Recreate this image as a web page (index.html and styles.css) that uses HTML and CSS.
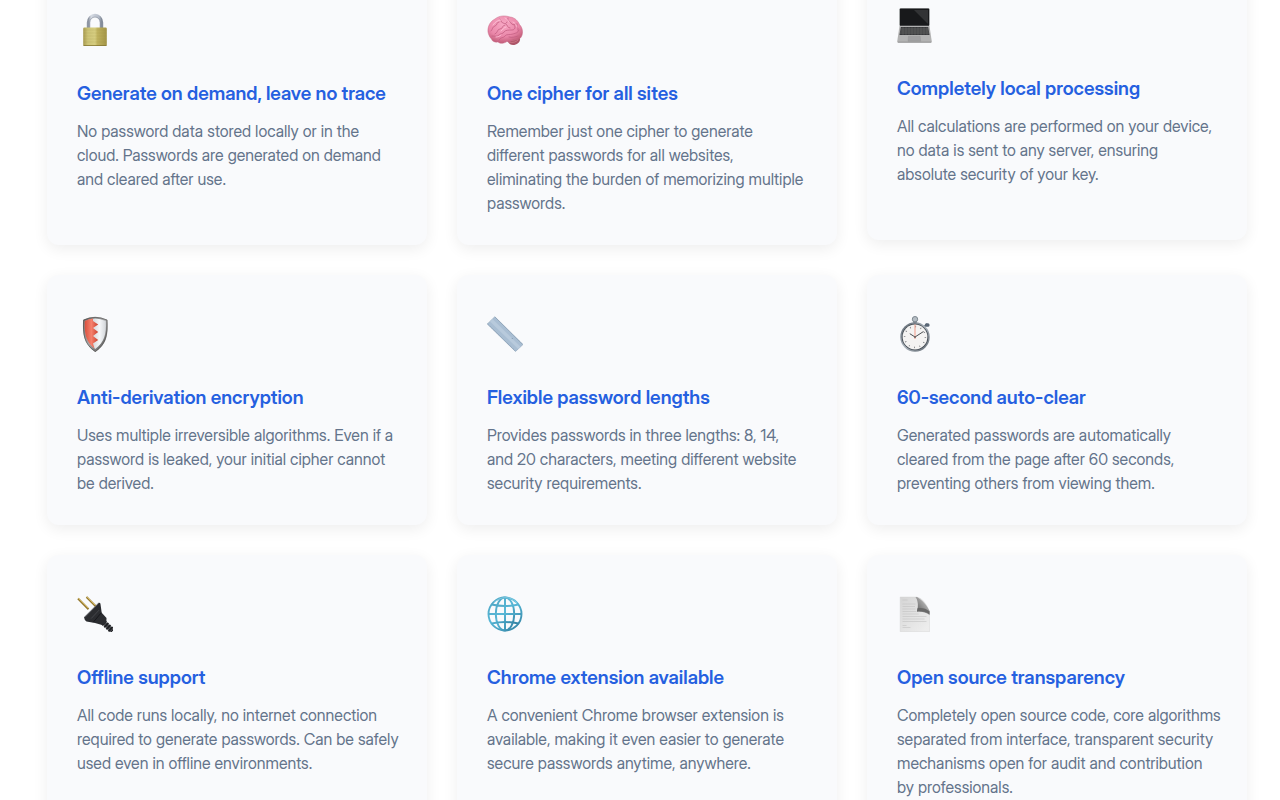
FILE: index.html
```html
<!DOCTYPE html>
<html lang="en">
<head>
<meta charset="utf-8">
<meta name="viewport" content="width=device-width, initial-scale=1">
<title>Features</title>
<link rel="stylesheet" href="styles.css">
</head>
<body>
<main class="features">
  <article class="card">
    <div class="card-icon">
      <svg class="icon" viewBox="0 0 36 36" aria-hidden="true">
        <defs>
          <linearGradient id="brass" x2="1"><stop offset="0" stop-color="#a89b50"/><stop offset=".2" stop-color="#cdc477"/><stop offset=".5" stop-color="#d6cd80"/><stop offset=".6" stop-color="#c0b35f"/><stop offset="1" stop-color="#a39446"/></linearGradient>
          <linearGradient id="steel" x2="1"><stop offset="0" stop-color="#8f96a3"/><stop offset=".2" stop-color="#d5dae3"/><stop offset=".8" stop-color="#b4bbc8"/><stop offset="1" stop-color="#858d9b"/></linearGradient>
        </defs>
        <path d="M11.500 17V10.500a6.500 7 0 0 1 13 0V17" fill="none" stroke="url(#steel)" stroke-width="3.400"/>
        <path d="M12.700 16V10.500a5.300 5.500 0 0 1 10.600 0V16" fill="none" stroke="#7f8794" stroke-width=".5"/>
        <rect x="6.200" y="15.500" width="23.600" height="18.500" rx="1.300" fill="url(#brass)"/>
        <path d="M6.500 18h23M6.500 21h23M6.500 24h23M6.500 27h23M6.500 30h23" stroke="#9c8f43" stroke-width=".4" opacity=".4"/>
        <path d="M6.500 33.500h23" stroke="#857734" stroke-width=".8"/>
      </svg>
    </div>
    <h3 class="card-title">Generate on demand, leave no trace</h3>
    <p class="card-text">No password data stored locally or in the cloud. Passwords are generated on demand and cleared after use.</p>
  </article>

  <article class="card">
    <div class="card-icon">
      <svg class="icon" viewBox="0 0 36 36" aria-hidden="true">
        <defs><radialGradient id="brain" cx=".45" cy=".3" r=".75"><stop offset="0" stop-color="#f7a8c4"/><stop offset=".6" stop-color="#ea87a9"/><stop offset="1" stop-color="#b9546f"/></radialGradient></defs>
        <path d="M20 26c1-3 12-3 13 .5.500 3.500-3 6.500-7 6.500-3.500 0-6-3-6-7z" fill="#ad5568"/>
        <path d="M21 28c4 1 8 0 11-2M22 30c4 1 7 0 9-2" stroke="#d88291" stroke-width=".7" fill="none"/>
        <path d="M1 20C.5 14.500 3 9.500 8 7 12 3.500 18 3.300 23 5c5 .5 8 4 9.500 7.500 3 3 4 8 2 12-1.500 3-5 4-8.500 3-2 2-4 2.500-6 2-3 2-7 2.500-9 .5-3 .5-6-.5-6.500-3C2.500 25 1.500 22.500 1 20z" fill="url(#brain)" stroke="#c96b89" stroke-width=".5"/>
        <path d="M4 19c2-2 1-4 4-5s1-4 4-4M8 22c3-1 2-5 5-5s2-4 5-4M13 7c2 1 0 3 3 4s3 1 4-1M5 24c3 0 5 1 7-1s4-1 5-3 5-2 8-2 4-3 2-5M12 28c1-3 5-2 6-4s5-1 8-2 5-1 6-4M21 6c-1 3 2 3 3 5s3 2 5 1M30 12c-1 3 2 4 1 6M22 25c3 1 6 0 9-1M19 12c2 1 1 4 4 4" fill="none" stroke="#c45f83" stroke-width=".8" stroke-linecap="round"/>
        <path d="M6 13c2-3 5-5 8-5M18 6c2 1 3 2 4 4M14 19c2-1 3-4 5-4M26 10c2 1 3 2 4 5M9 25c2 0 4-1 5-2" fill="none" stroke="#ffc4d8" stroke-width=".8" stroke-linecap="round"/>
      </svg>
    </div>
    <h3 class="card-title">One cipher for all sites</h3>
    <p class="card-text">Remember just one cipher to generate different passwords for all websites,<br>eliminating the burden of memorizing multiple passwords.</p>
  </article>

  <article class="card card-raised">
    <div class="card-icon">
      <svg class="icon" viewBox="0 0 36 36" aria-hidden="true">
        <rect x="2.300" y="1.200" width="30.400" height="18" rx="1.200" fill="#b9bbbd"/>
        <rect x="2.800" y="1.600" width="29.400" height="17.200" rx=".9" fill="#18191b"/>
        <path d="M17 3h14v14z" fill="#3d3e40" opacity=".7"/>
        <path d="M2.500 19h30l2.300 15.500q0 1-1 1H1.200q-1 0-1-1z" fill="#b2b2b2"/>
        <path d="M3.800 20h27.400l1.300 8H2.500z" fill="#37383a"/>
        <path d="M3.700 22h27.700M3.300 24h28.400M3 26h29" stroke="#858585" stroke-width=".5"/>
        <path d="M6 20v8M9 20v8M12 20v8M15 20v8M18 20v8M21 20v8M24 20v8M27 20v8M30 20v8" stroke="#777" stroke-width=".35"/>
        <path d="M11.500 29.200h11.700l.5 5H11z" fill="#a0a0a1" stroke="#8c8c8d" stroke-width=".3"/>
        <path d="M.8 35.200h33.500" stroke="#858585" stroke-width=".8"/>
      </svg>
    </div>
    <h3 class="card-title">Completely local processing</h3>
    <p class="card-text">All calculations are performed on your device, no data is sent to any server, ensuring<br>absolute security of your key.</p>
  </article>

  <article class="card">
    <div class="card-icon">
      <svg class="icon" viewBox="0 0 36 36" aria-hidden="true">
        <defs>
          <linearGradient id="rim" x2="1" y2="1"><stop offset="0" stop-color="#62605f"/><stop offset=".5" stop-color="#a6a7a8"/><stop offset="1" stop-color="#484645"/></linearGradient>
          <linearGradient id="red" x2="1"><stop offset="0" stop-color="#d9503e"/><stop offset=".5" stop-color="#f5816d"/><stop offset="1" stop-color="#cb412f"/></linearGradient>
          <linearGradient id="silver" x2="1"><stop offset="0" stop-color="#aeb0b3"/><stop offset=".7" stop-color="#f5f6f8"/><stop offset="1" stop-color="#d3d6da"/></linearGradient>
        </defs>
        <path d="M6.300 3.800Q18-2 30.300 3.800C31 18 30 28 18.300 36 6.500 28 5.500 18 6.300 3.800z" fill="url(#rim)"/>
        <path d="M7.800 5Q18 0 28.800 5C29.500 18 27.500 26 18.300 33 9 26 7.200 18 7.800 5z" fill="url(#silver)"/>
        <path d="M7.800 5Q12 2.700 16 2.600V5l5.200 3.600L16 12l5.200 4-5.200 4 5.200 4-5.200 3.500 1.500 5C9 26 7.200 18 7.800 5z" fill="url(#red)"/>
        <path d="M6.600 4Q18-1.500 30 4C30.700 18 29.700 28 18.300 35.600 6.800 28 5.900 18 6.600 4z" fill="none" stroke="#4d4b4a" stroke-width=".6"/>
      </svg>
    </div>
    <h3 class="card-title">Anti-derivation encryption</h3>
    <p class="card-text">Uses multiple irreversible algorithms. Even if a password is leaked, your initial cipher cannot be derived.</p>
  </article>

  <article class="card">
    <div class="card-icon">
      <svg class="icon" viewBox="0 0 36 36" aria-hidden="true">
        <path d="M7.800.7 36 28.500l-7.500 7L.3 8z" fill="#a9bed3" stroke="#8299ae" stroke-width=".5"/>
        <path d="M5.500 3 33.500 30.700l-2.400 2.300L3 5.400z" fill="#b8cadc"/>
        <path d="m8 1 27.700 27.500" stroke="#718aa2" stroke-width=".9" stroke-dasharray=".6 .9"/>
        <path d="m.7 8 27.800 27.200" stroke="#7b92a8" stroke-width=".9" stroke-dasharray=".6 .9"/>
        <circle cx="25.300" cy="22.500" r=".6" fill="#8198af"/>
      </svg>
    </div>
    <h3 class="card-title">Flexible password lengths</h3>
    <p class="card-text">Provides passwords in three lengths: 8, 14,<br>and 20 characters, meeting different website security requirements.</p>
  </article>

  <article class="card">
    <div class="card-icon">
      <svg class="icon" viewBox="0 0 36 36" aria-hidden="true">
        <defs><linearGradient id="case" x2="1" y2="1"><stop offset="0" stop-color="#555e68"/><stop offset=".5" stop-color="#adb5bd"/><stop offset="1" stop-color="#59626b"/></linearGradient></defs>
        <path d="m26 12 4-4" stroke="#6f7b87" stroke-width="2"/>
        <rect x="28" y="7.200" width="4.500" height="3.500" rx="1.500" fill="#596675"/>
        <rect x="16.300" y="3" width="3.400" height="4" fill="#68737d"/>
        <circle cx="18" cy="3.200" r="2.700" fill="#b5bdc4" stroke="#7e8890" stroke-width="1"/>
        <circle cx="18" cy="21" r="14.700" fill="url(#case)"/>
        <circle cx="18" cy="21" r="13.200" fill="#414850"/>
        <circle cx="18" cy="21" r="12.400" fill="#f4f3f2"/>
        <circle cx="18" cy="21" r="10.400" fill="none" stroke="#77797c" stroke-width="1.500" stroke-dasharray=".8 4.645"/>
        <path d="m18 21-5.200-3.300M18 21l8.500-5.500" stroke="#353a3d" stroke-width=".9"/>
        <path d="M18 23V8.500" stroke="#f29b87" stroke-width="1"/>
        <circle cx="18" cy="21" r=".9" fill="#555"/>
      </svg>
    </div>
    <h3 class="card-title">60-second auto-clear</h3>
    <p class="card-text">Generated passwords are automatically cleared from the page after 60 seconds, preventing others from viewing them.</p>
  </article>

  <article class="card">
    <div class="card-icon">
      <svg class="icon" viewBox="0 0 36 36" aria-hidden="true">
        <path d="m1 2.500 10.500 10.700M9.500 1l9 9" stroke="#94782e" stroke-width="2"/>
        <path d="m1.300 2.200 10 10M9.800.8l8.700 8.700" stroke="#dfc56e" stroke-width=".8"/>
        <path d="m25 25 10.500 10" stroke="#55565a" stroke-width="4"/>
        <path d="m26.500 26.500 9 8.500" stroke="#1f2024" stroke-width="6" stroke-dasharray="2 .9"/>
        <path d="M21.600 6.800q1.200-.4 1.800.7l1.300 9.200 4.800 5.300q.5 5.500-4.500 7L18 27l-8.500-1.500q-2.200-1.500-2.500-4.200z" fill="#2b2c30"/>
        <path d="M21.800 7.200 7.800 21.400" stroke="#696b70" stroke-width=".8"/>
        <path d="m24.300 16.700-8 9.500" stroke="#111217" stroke-width=".8"/>
        <path d="m22.200 14-8 8.500" stroke="#4a4b50" stroke-width=".8"/>
      </svg>
    </div>
    <h3 class="card-title">Offline support</h3>
    <p class="card-text">All code runs locally, no internet connection required to generate passwords. Can be safely used even in offline environments.</p>
  </article>

  <article class="card">
    <div class="card-icon">
      <svg class="icon" viewBox="0 0 36 36" aria-hidden="true">
        <defs><linearGradient id="globe" x2=".8" y2="1"><stop offset="0" stop-color="#4fa6c4"/><stop offset=".5" stop-color="#58b8d7"/><stop offset="1" stop-color="#3687a8"/></linearGradient></defs>
        <g fill="none" stroke="url(#globe)" stroke-width="1.900">
          <circle cx="18" cy="18" r="16.500"/>
          <ellipse cx="18" cy="18" rx="9.200" ry="16.500"/>
          <path d="M17 1.500h2v33h-2zM1.500 17h33v2h-33z" fill="url(#globe)" stroke="none"/>
          <path d="M4.500 8.500q13.500 3 27 0M4.500 27.500q13.500-3 27 0"/>
        </g>
        <path d="M7 6.500C14-.2 24 0 30 7" fill="none" stroke="#a9deee" stroke-width=".5"/>
      </svg>
    </div>
    <h3 class="card-title">Chrome extension available</h3>
    <p class="card-text">A convenient Chrome browser extension is available, making it even easier to generate secure passwords anytime, anywhere.</p>
  </article>

  <article class="card">
    <div class="card-icon">
      <svg class="icon" viewBox="0 0 36 36" aria-hidden="true">
        <defs>
          <linearGradient id="paper" x2=".8" y2="1"><stop offset="0" stop-color="#d5d5d5"/><stop offset="1" stop-color="#ededed"/></linearGradient>
          <linearGradient id="fold" x1="1" x2="0" y2="1"><stop offset="0" stop-color="#eee"/><stop offset=".35" stop-color="#aaa"/><stop offset="1" stop-color="#4f4f4f"/></linearGradient>
        </defs>
        <path d="M3.200 1h16.300q8 1 13 15v19.700H3.200z" fill="url(#paper)" stroke="#cecece" stroke-width=".4"/>
        <path d="M5.500 4h5M5.500 8h13M5.500 10.500h12.500M5.500 13h13M5.500 15.500h14M5.500 18h16M5.500 20.500h24M5.500 23h22M5.500 25.500h24M5.500 29.500h4M5.500 31.500h8" stroke="#bcbcbc" stroke-width=".5"/>
        <path d="M18.500 1c2.200 3 3.300 8 1.500 14.500 4-.5 9.500.6 12.500 3.500v-4.200C30 9 25 4 20.500 1.200z" fill="url(#fold)"/>
        <path d="M20 15.500c4-.7 9.500.5 12.500 3v-3.200c-3.500-3-8-4-12-3z" fill="#686868"/>
      </svg>
    </div>
    <h3 class="card-title">Open source transparency</h3>
    <p class="card-text">Completely open source code, core algorithms separated from interface, transparent security mechanisms open for audit and contribution by professionals.</p>
  </article>
</main>
</body>
</html>
```
FILE: styles.css
```css
* {
  box-sizing: border-box;
}

body {
  margin: 0;
  background: #fff;
  color: #64748b;
  font-family: "Inter Display", Inter, "Liberation Sans", sans-serif;
  font-size: 16px;
  line-height: 24px;
}

/* The first row runs off the top edge of the window. */
.features {
  display: grid;
  grid-template-columns: repeat(3, minmax(0, 1fr));
  gap: 30px;
  margin-top: -29px;
  padding: 0 33px 30px 47px;
}

.card {
  padding: 30px 24px 30px 30px;
  border-radius: 12px;
  background: #f9fafc;
  box-shadow: 0 4px 15px rgba(0, 0, 0, 0.07);
}

.card-raised {
  transform: translateY(-5px);
}

.card-icon {
  display: flex;
  align-items: center;
  height: 58px;
  margin-bottom: 21px;
}

.icon {
  display: block;
  width: 36px;
  height: 36px;
}

.card-title {
  margin: 0 0 11px;
  color: #2560e0;
  font-size: 19px;
  font-weight: 600;
  line-height: 28px;
}

.card-text {
  margin: 0;
}
```
